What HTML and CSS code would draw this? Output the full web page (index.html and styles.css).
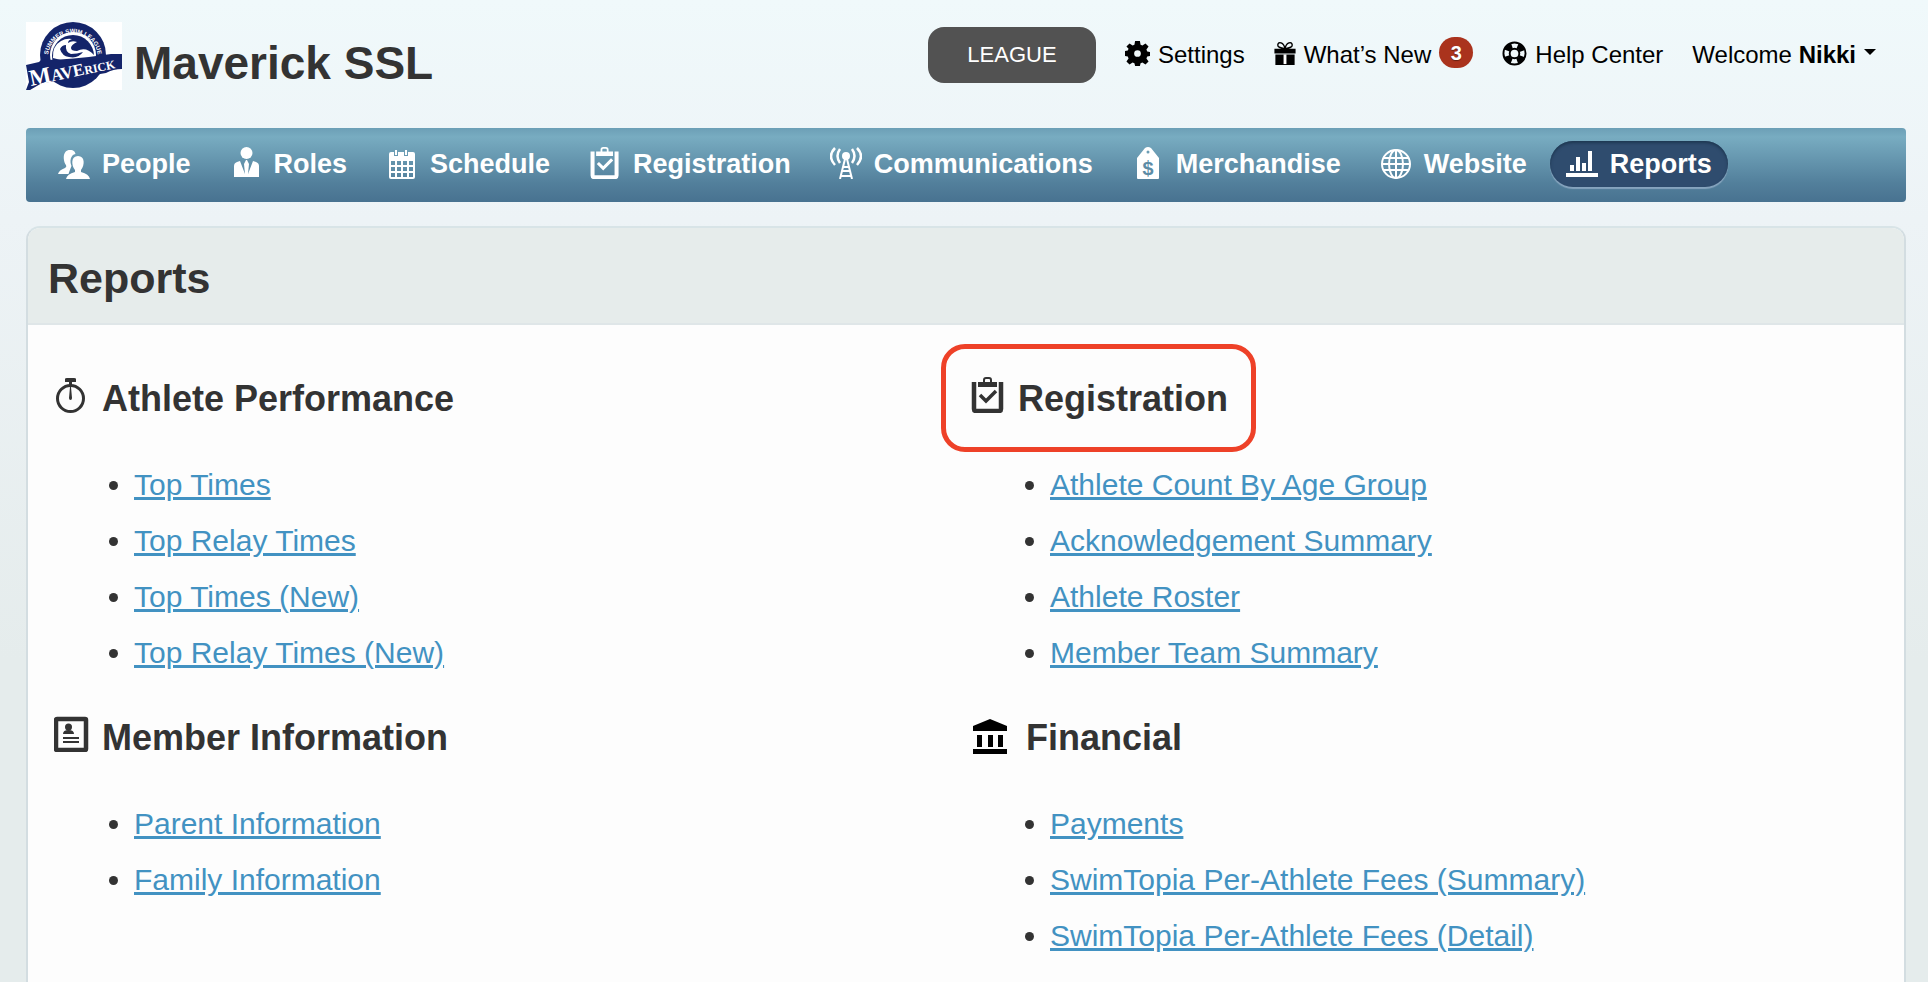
FILE: index.html
```html
<!DOCTYPE html>
<html lang="en">
<head>
    <meta charset="UTF-8">
    <meta name="viewport" content="width=device-width, initial-scale=1.0">
    <title>Reports - Maverick SSL</title>
    <link rel="stylesheet" href="styles.css">
</head>
<body>
    <svg class="sprite" aria-hidden="true">
        <symbol id="clipboard" viewBox="0 0 36 36">
            <path d="M4 5v27q0 2 2 2h23q2 0 2-2V5" fill="none" stroke="currentColor" stroke-width="4.500"/>
            <path fill="currentColor" fill-rule="evenodd" d="M8 5h5V3q0-3 3-3h3q3 0 3 3v2h5v5H8zM15 5h5V3q0-1-1-1h-3q-1 0-1 1z"/>
            <path d="M10 18l6 6 10-10" fill="none" stroke="currentColor" stroke-width="3.500"/>
        </symbol>
    </svg>

    <header class="header">
        <a class="brand" href="#">
            <svg class="logo" viewBox="0 0 96 68" role="img" aria-label="Maverick Summer Swim League">
                <defs>
                    <path id="arc" d="M22 36A25 25 0 1 1 72 36"/>
                </defs>
                <rect width="96" height="68" fill="#fff"/>
                <circle cx="47" cy="33" r="33" fill="#14246a"/>
                <circle cx="47" cy="33" r="23" fill="#fff"/>
                <circle cx="47" cy="34" r="21" fill="#14246a"/>
                <path d="M27 36q-1-12 8-17 5-3 11-2-4 1-4 4 4-3 9-1-6 3-6 6t6 3q9-5 17 4l2 6-20 3z" fill="#fff"/>
                <path d="M34 27q2-4 6-4-1 7 5 9 6 0 12-2-5 7-14 5-7-1-9-8z" fill="#14246a"/>
                <text class="logo-ring" text-anchor="middle"><textPath href="#arc" startOffset="50%">SUMMER SWIM LEAGUE</textPath></text>
                <path d="M0 43l13-3 2-2q30 0 70-6h11v15q-9 0-16 4-34 6-64 10l-12 7H0l3-8z" fill="#14246a"/>
                <g transform="rotate(-12 5 64)">
                    <text class="logo-name" x="5" y="64"><tspan class="logo-big">M</tspan>AVE<tspan class="logo-small">RICK</tspan></text>
                </g>
            </svg>
            <span class="brand-name">Maverick SSL</span>
        </a>
        <div class="tools">
            <button class="league" type="button">LEAGUE</button>
            <a class="tool" href="#">
                <svg class="tool-icon" viewBox="0 0 26 26" fill="currentColor" aria-hidden="true">
                    <path fill-rule="evenodd" d="M10.500 0h5l.7 3.900 1.900.8L21.300 2.500l3.200 3.200-2.200 3.200.8 1.900 2.900.6v4.200l-2.900.6-.8 1.900 2.200 3.200-3.200 3.200-3.200-2.200-1.900.8-.7 2.900h-5l-.7-2.900-1.900-.8-3.200 2.200-3.200-3.200 2.200-3.200-.8-1.900L0 15.500v-5l2.900-.6.8-1.900L1.500 5.700l3.200-3.200 3.200 2.200 1.900-.8zM13 9.500a3.500 3.500 0 1 0 0 7 3.500 3.500 0 1 0 0-7z"/>
                </svg>
                Settings
            </a>
            <a class="tool" href="#">
                <svg class="tool-icon tool-icon-gift" viewBox="0 0 22 26" aria-hidden="true">
                    <path d="M11 8Q3 7 3.500 4 4 1 7 2q3 1 4 6 1-5 4-6 3-1 3.500 2 .5 3-7.500 4" fill="none" stroke="currentColor" stroke-width="1.500"/>
                    <path fill="currentColor" d="M0 8h22v5H0zM1 14h20v11H1z"/>
                    <path d="M11 14v10" stroke="#fff" stroke-width="3"/>
                </svg>
                What’s New
                <span class="badge">3</span>
            </a>
            <a class="tool" href="#">
                <svg class="tool-icon" viewBox="0 0 26 26" fill="none" stroke="currentColor" aria-hidden="true">
                    <circle cx="13" cy="13" r="11.500" stroke-width="2"/>
                    <circle cx="13" cy="13" r="5" stroke-width="2"/>
                    <circle cx="13" cy="13" r="8.500" stroke-width="6" stroke-dasharray="7.350 6" stroke-dashoffset="-3"/>
                </svg>
                Help Center
            </a>
            <a class="tool" href="#">
                <span>Welcome <strong>Nikki</strong></span>
                <span class="caret"></span>
            </a>
        </div>
    </header>

    <nav class="nav">
        <a class="nav-item" href="#">
            <svg class="nav-icon" viewBox="0 0 32 32" fill="currentColor" aria-hidden="true">
                <path d="M12 3c4 0 5 2 5.500 4-5 1-6 7-4 12l-2 5-1 3H0q1-4 7-6 2-1 1-3c-3-4-4-15 4-15z"/>
                <path d="M20 9c7 0 7 9 3 14v2q8 2 9 7H8q1-5 9-7v-2c-4-5-4-14 3-14z"/>
            </svg>
            People
        </a>
        <a class="nav-item" href="#">
            <svg class="nav-icon" viewBox="0 0 32 32" fill="currentColor" aria-hidden="true">
                <circle cx="16.500" cy="6" r="6"/>
                <path d="M4 30V19q0-3 3-4l3-1 5 13-1-10 2-4h1l2 4-1 10 5-13 3 1q3 1 3 4v11z"/>
            </svg>
            Roles
        </a>
        <a class="nav-item" href="#">
            <svg class="nav-icon" viewBox="0 0 32 32" aria-hidden="true">
                <path fill="currentColor" fill-rule="evenodd" d="M5 5h3v4h4V5h6v4h4V5h5q2 0 2 2v23q0 2-2 2H5q-2 0-2-2V7q0-2 2-2zM5 14v4h4v-4zm6 0v4h4v-4zm6 0v4h4v-4zm6 0v4h4v-4zM5 20v4h4v-4zm6 0v4h4v-4zm6 0v4h4v-4zm6 0v4h4v-4zM5 26v4h4v-4zm6 0v4h4v-4zm6 0v4h4v-4zm6 0v4h4v-4z"/>
                <path d="M10 3v5M20 3v5" stroke="currentColor" stroke-width="2"/>
            </svg>
            Schedule
        </a>
        <a class="nav-item" href="#">
            <svg class="nav-icon" aria-hidden="true"><use href="#clipboard"/></svg>
            Registration
        </a>
        <a class="nav-item" href="#">
            <svg class="nav-icon" viewBox="0 0 32 32" fill="none" stroke="currentColor" stroke-width="2" aria-hidden="true">
                <circle cx="16" cy="9" r="4" fill="currentColor" stroke="none"/>
                <path d="M15 12L10 32M17 12l5 20M13 20h6M12 24h8M11 29h10"/>
                <path d="M10 2q-5 7 0 14M22 2q5 7 0 14M5 1q-8 8 0 17M27 1q8 8 0 17" stroke-width="2.500"/>
            </svg>
            Communications
        </a>
        <a class="nav-item" href="#">
            <svg class="nav-icon" viewBox="0 0 32 32" aria-hidden="true">
                <path fill="currentColor" fill-rule="evenodd" d="M5 11l8-10q3-2 6 0l8 10v20q0 1-1 1H6q-1 0-1-1zM16 3.500a1.500 1.500 0 1 0 0 3 1.500 1.500 0 1 0 0-3z"/>
                <text class="tag-price" x="16" y="28">$</text>
            </svg>
            Merchandise
        </a>
        <a class="nav-item" href="#">
            <svg class="nav-icon" viewBox="0 0 32 32" fill="none" stroke="currentColor" stroke-width="2" aria-hidden="true">
                <circle cx="16" cy="17" r="14"/>
                <ellipse cx="16" cy="17" rx="7" ry="14"/>
                <path d="M16 3v28M2 17h28M4 11h24M4 23h24"/>
            </svg>
            Website
        </a>
        <a class="nav-item active" href="#" aria-current="page">
            <svg class="nav-icon" viewBox="0 0 32 32" fill="currentColor" aria-hidden="true">
                <path d="M0 26h32v4H0zM4 18h4v6H4zM10 10h4v14h-4zM16 16h4v8h-4zM22 4h4v20h-4z"/>
            </svg>
            Reports
        </a>
    </nav>

    <main class="panel">
        <h1 class="panel-title">Reports</h1>
        <div class="columns">
            <div class="column">
                <section>
                    <h2 class="section-title">
                        <svg class="section-icon" viewBox="0 0 36 36" aria-hidden="true">
                            <circle cx="16.500" cy="21.500" r="13" fill="none" stroke="currentColor" stroke-width="3"/>
                            <path fill="currentColor" d="M11 5V2q0-1 2-1h7q2 0 2 1v3h-4v4h-3V5zM16 10h1l1 11q0 2-1.500 2T15 21z"/>
                        </svg>
                        Athlete Performance
                    </h2>
                    <ul class="links">
                        <li><a href="#">Top Times</a></li>
                        <li><a href="#">Top Relay Times</a></li>
                        <li><a href="#">Top Times (New)</a></li>
                        <li><a href="#">Top Relay Times (New)</a></li>
                    </ul>
                </section>
                <section>
                    <h2 class="section-title">
                        <svg class="section-icon" viewBox="0 0 36 36" aria-hidden="true">
                            <rect x="2" y="3" width="30" height="31" rx="1" fill="none" stroke="currentColor" stroke-width="4.500"/>
                            <circle cx="14.500" cy="11" r="3.500" fill="currentColor"/>
                            <path fill="currentColor" d="M9 18q0-4 5.500-4t5.500 4zM9 21h16v2H9zM9 25h16v2H9z"/>
                        </svg>
                        Member Information
                    </h2>
                    <ul class="links">
                        <li><a href="#">Parent Information</a></li>
                        <li><a href="#">Family Information</a></li>
                    </ul>
                </section>
            </div>
            <div class="column">
                <section>
                    <h2 class="section-title highlighted">
                        <svg class="section-icon" aria-hidden="true"><use href="#clipboard"/></svg>
                        Registration
                    </h2>
                    <ul class="links">
                        <li><a href="#">Athlete Count By Age Group</a></li>
                        <li><a href="#">Acknowledgement Summary</a></li>
                        <li><a href="#">Athlete Roster</a></li>
                        <li><a href="#">Member Team Summary</a></li>
                    </ul>
                </section>
                <section>
                    <h2 class="section-title">
                        <svg class="section-icon section-icon-bank" viewBox="0 0 44 40" aria-hidden="true">
                            <path d="M3 13v-3L20 3l17 7v5H3zM7 19h5v12H7zM18 19h5v12h-5zM28 19h5v12h-5zM3 33h34v5H3z"/>
                        </svg>
                        Financial
                    </h2>
                    <ul class="links">
                        <li><a href="#">Payments</a></li>
                        <li><a href="#">SwimTopia Per-Athlete Fees (Summary)</a></li>
                        <li><a href="#">SwimTopia Per-Athlete Fees (Detail)</a></li>
                    </ul>
                </section>
            </div>
        </div>
    </main>
</body>
</html>
```

FILE: styles.css
```css
* {
    box-sizing: border-box;
}
body {
    display: flex;
    flex-direction: column;
    min-height: 100vh;
    margin: 0;
    padding: 0 22px 0 26px;
    font-family: "Liberation Sans", Arial, sans-serif;
    color: #333;
    background: #e5ecec linear-gradient(#f0f9fb, #edf3f6 220px, #e5ecec 660px) no-repeat;
}
a {
    color: inherit;
    text-decoration: none;
}
.sprite {
    position: absolute;
    width: 0;
    height: 0;
}

/* header */
.header {
    display: flex;
    justify-content: space-between;
    align-items: flex-start;
    height: 128px;
    padding-right: 30px;
}
.brand {
    display: flex;
    gap: 12px;
    padding-top: 22px;
}
.logo {
    width: 96px;
    height: 68px;
}
.logo-ring {
    fill: #fff;
    font-size: 6px;
    font-weight: bold;
}
.logo-name {
    fill: #fff;
    font-family: "Liberation Serif", serif;
    font-size: 17px;
    font-weight: bold;
}
.logo-big {
    font-size: 23px;
}
.logo-small {
    font-size: 12px;
}
.brand-name {
    font-size: 46px;
    font-weight: bold;
    line-height: 82px;
}
.tools {
    display: flex;
    align-items: center;
    gap: 29px;
    padding-top: 27px;
    font-size: 24px;
    line-height: 56px;
    color: #000;
}
.league {
    width: 168px;
    height: 56px;
    border: none;
    border-radius: 16px;
    background: #525252;
    color: #fff;
    font-family: inherit;
    font-size: 22px;
    cursor: pointer;
}
.tool {
    display: flex;
    align-items: center;
    gap: 8px;
}
.tool-icon {
    width: 25px;
    height: 25px;
    margin-bottom: 4px;
}
.tool-icon-gift {
    width: 22px;
}
.badge {
    width: 34px;
    height: 31px;
    margin-bottom: 6px;
    border-radius: 16px;
    background: #aa331d;
    color: #fff;
    font-size: 20px;
    font-weight: bold;
    line-height: 32px;
    text-align: center;
    text-shadow: 0 1px 1px rgba(0, 0, 0, 0.4);
}
.caret {
    margin-bottom: 6px;
    border: 6px solid transparent;
    border-top-color: #000;
    border-bottom: none;
}

/* main navigation */
.nav {
    display: flex;
    gap: 7px;
    padding: 13px 16px 15px;
    border-radius: 4px;
    background: linear-gradient(#6c9fb6, #78acc1 12%, #527f9b 75%, #487290);
}
.nav-item {
    display: flex;
    align-items: center;
    gap: 12px;
    padding: 0 16px;
    border-radius: 23px;
    color: #fff;
    font-size: 27px;
    font-weight: bold;
    line-height: 46px;
}
.nav-item.active {
    background: #2f4c6e;
    box-shadow: inset 0 2px 3px #1e3852, 0 2px 1px #86a4be;
}
.nav-icon {
    width: 32px;
    height: 32px;
    margin-bottom: 2px;
}
.tag-price {
    fill: #5c8ca6;
    font-family: "Liberation Mono", monospace;
    font-size: 20px;
    text-anchor: middle;
}

/* reports panel */
.panel {
    flex: 1;
    margin-top: 24px;
    border: 2px solid #d3dde1;
    border-top-color: #d8e4e7;
    border-bottom: none;
    border-radius: 14px 14px 0 0;
    background: #fdfdfd;
}
.panel-title {
    margin: 0;
    padding: 5px 20px 0;
    border-bottom: 2px solid #dfe6e8;
    border-radius: 12px 12px 0 0;
    background: #e6eceb;
    font-size: 43px;
    line-height: 90px;
}
.columns {
    display: grid;
    grid-template-columns: 1fr 1fr;
    padding: 52px 22px 18px;
}
.column {
    display: flex;
    flex-direction: column;
    gap: 35px;
}
.section-title {
    display: flex;
    align-items: flex-start;
    gap: 12px;
    width: fit-content;
    margin: 0 0 36px;
    padding-left: 4px;
    font-size: 36px;
    line-height: 44px;
}
.section-icon {
    width: 36px;
    height: 36px;
}
.section-icon-bank {
    width: 44px;
    height: 40px;
}
.highlighted {
    position: relative;
}
.highlighted::after {
    content: "";
    position: absolute;
    inset: -33px -28px -31px -25px;
    border: 5px solid #ee4128;
    border-radius: 24px;
}
.links {
    margin: 0;
    padding-left: 84px;
    font-size: 30px;
    line-height: 56px;
}
.links a {
    color: #4292c2;
    text-decoration: underline;
    text-decoration-thickness: 3px;
}
```
